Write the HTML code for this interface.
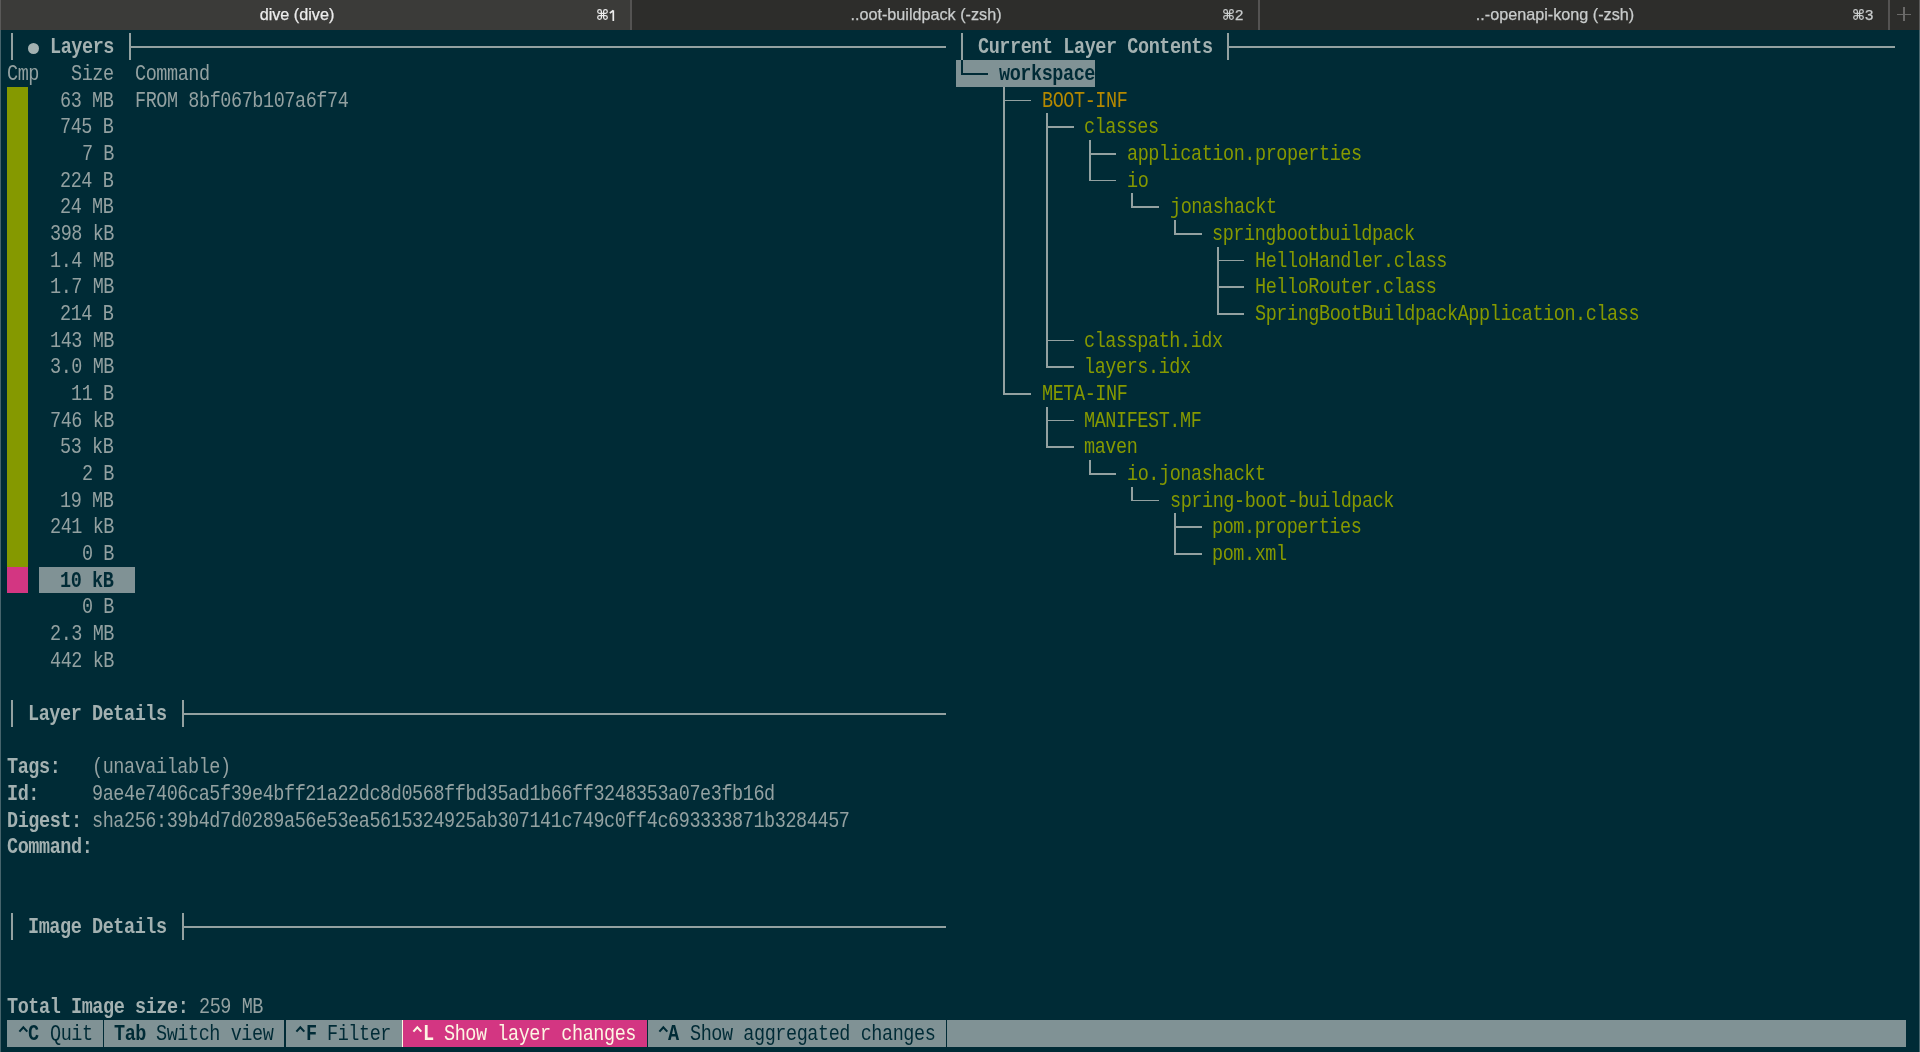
<!DOCTYPE html>
<html><head><meta charset="utf-8"><style>
html,body{margin:0;padding:0;}
body{width:1920px;height:1052px;position:relative;overflow:hidden;background:#002b36;}
.r{position:absolute;}
.t{position:absolute;white-space:pre;font-family:"Liberation Mono",monospace;font-size:18.5px;letter-spacing:-0.4333px;line-height:26.6667px;height:26.6667px;transform:scaleY(1.18);transform-origin:0 0;-webkit-font-smoothing:antialiased;will-change:transform;}
.ts{position:absolute;top:0;white-space:pre;will-change:transform;font-family:"Liberation Sans",sans-serif;font-size:16.2px;line-height:29px;-webkit-text-stroke:0.25px currentColor;}
.cm{position:absolute;}
</style></head><body>
<div class="r" style="left:0;top:0;width:1920px;height:30px;background:#2d2d2b"></div>
<div class="r" style="left:0;top:0;width:630px;height:30px;background:#3b3b39"></div>
<div class="r" style="left:630.00px;top:0.00px;width:1.50px;height:30.00px;background:#545352"></div>
<div class="r" style="left:1258.00px;top:0.00px;width:1.50px;height:30.00px;background:#545352"></div>
<div class="r" style="left:1888.00px;top:0.00px;width:1.50px;height:30.00px;background:#545352"></div>
<div class="ts" style="left:47px;width:500px;text-align:center;color:#ececec">dive (dive)</div>
<div class="ts" style="left:675.5px;width:500px;text-align:center;color:#c9cccc">..oot-buildpack (-zsh)</div>
<div class="ts" style="left:1304.7px;width:500px;text-align:center;color:#c9cccc">..-openapi-kong (-zsh)</div>
<svg class="cm" style="left:596.5px;top:9px;overflow:visible" width="11" height="11" viewBox="0 0 11 11"><path d="M4.40 2.55 V8.45 M6.60 2.55 V8.45 M2.55 4.40 H8.45 M2.55 6.60 H8.45 M4.40 2.55 A1.85 1.85 0 1 0 2.55 4.40 M6.60 2.55 A1.85 1.85 0 1 1 8.45 4.40 M6.60 8.45 A1.85 1.85 0 1 0 8.45 6.60 M4.40 8.45 A1.85 1.85 0 1 1 2.55 6.60" fill="none" stroke="#ececec" stroke-width="1.25"/></svg>
<svg class="cm" style="left:608.5px;top:8.5px" width="7" height="13" viewBox="0 0 7 13"><path d="M4.3 1.2 V12 M4.3 1.5 L0.8 4.2" fill="none" stroke="#ececec" stroke-width="1.7"/></svg>
<svg class="cm" style="left:1222.5px;top:9px;overflow:visible" width="11" height="11" viewBox="0 0 11 11"><path d="M4.40 2.55 V8.45 M6.60 2.55 V8.45 M2.55 4.40 H8.45 M2.55 6.60 H8.45 M4.40 2.55 A1.85 1.85 0 1 0 2.55 4.40 M6.60 2.55 A1.85 1.85 0 1 1 8.45 4.40 M6.60 8.45 A1.85 1.85 0 1 0 8.45 6.60 M4.40 8.45 A1.85 1.85 0 1 1 2.55 6.60" fill="none" stroke="#c9cccc" stroke-width="1.25"/></svg>
<div class="ts" style="left:1235.0px;color:#c9cccc;font-size:15px;line-height:30px">2</div>
<svg class="cm" style="left:1852.5px;top:9px;overflow:visible" width="11" height="11" viewBox="0 0 11 11"><path d="M4.40 2.55 V8.45 M6.60 2.55 V8.45 M2.55 4.40 H8.45 M2.55 6.60 H8.45 M4.40 2.55 A1.85 1.85 0 1 0 2.55 4.40 M6.60 2.55 A1.85 1.85 0 1 1 8.45 4.40 M6.60 8.45 A1.85 1.85 0 1 0 8.45 6.60 M4.40 8.45 A1.85 1.85 0 1 1 2.55 6.60" fill="none" stroke="#c9cccc" stroke-width="1.25"/></svg>
<div class="ts" style="left:1865.0px;color:#c9cccc;font-size:15px;line-height:30px">3</div>
<div class="r" style="left:1897.00px;top:13.60px;width:14.00px;height:1.30px;background:#6a6968"></div>
<div class="r" style="left:1903.40px;top:7.20px;width:1.30px;height:14.00px;background:#6a6968"></div>
<div class="r" style="left:0.00px;top:30.00px;width:1.30px;height:1022.00px;background:#46646c"></div>
<div class="r" style="left:0.00px;top:0.00px;width:1.30px;height:30.00px;background:#5a5958"></div>
<div class="r" style="left:1918.70px;top:30.00px;width:1.30px;height:1022.00px;background:#46646c"></div>
<div class="r" style="left:1918.70px;top:0.00px;width:1.30px;height:30.00px;background:#5a5958"></div>
<div class="r" style="left:11.43px;top:33.33px;width:1.80px;height:26.67px;background:#93a1a1"></div>
<div class="r" style="left:28.17px;top:42.87px;width:11px;height:11px;border-radius:50%;background:#a3b1b1"></div>
<div class="t" style="left:49.67px;top:33.33px;color:#a3b1b1;font-weight:bold;">Layers</div>
<div class="r" style="left:128.77px;top:33.33px;width:1.80px;height:26.67px;background:#93a1a1"></div>
<div class="r" style="left:128.77px;top:46.27px;width:816.90px;height:1.80px;background:#93a1a1"></div>
<div class="t" style="left:7.00px;top:60.00px;color:#93a1a1;">Cmp   Size  Command</div>
<div class="r" style="left:7.00px;top:86.67px;width:21.33px;height:480.00px;background:#859900"></div>
<div class="r" style="left:7.00px;top:566.67px;width:21.33px;height:26.67px;background:#d33682"></div>
<div class="r" style="left:39.00px;top:566.67px;width:96.00px;height:26.67px;background:#809295"></div>
<div class="t" style="left:60.33px;top:86.67px;color:#93a1a1;">63 MB</div>
<div class="t" style="left:60.33px;top:113.33px;color:#93a1a1;">745 B</div>
<div class="t" style="left:81.67px;top:140.00px;color:#93a1a1;">7 B</div>
<div class="t" style="left:60.33px;top:166.67px;color:#93a1a1;">224 B</div>
<div class="t" style="left:60.33px;top:193.33px;color:#93a1a1;">24 MB</div>
<div class="t" style="left:49.67px;top:220.00px;color:#93a1a1;">398 kB</div>
<div class="t" style="left:49.67px;top:246.67px;color:#93a1a1;">1.4 MB</div>
<div class="t" style="left:49.67px;top:273.33px;color:#93a1a1;">1.7 MB</div>
<div class="t" style="left:60.33px;top:300.00px;color:#93a1a1;">214 B</div>
<div class="t" style="left:49.67px;top:326.67px;color:#93a1a1;">143 MB</div>
<div class="t" style="left:49.67px;top:353.33px;color:#93a1a1;">3.0 MB</div>
<div class="t" style="left:71.00px;top:380.00px;color:#93a1a1;">11 B</div>
<div class="t" style="left:49.67px;top:406.67px;color:#93a1a1;">746 kB</div>
<div class="t" style="left:60.33px;top:433.33px;color:#93a1a1;">53 kB</div>
<div class="t" style="left:81.67px;top:460.00px;color:#93a1a1;">2 B</div>
<div class="t" style="left:60.33px;top:486.67px;color:#93a1a1;">19 MB</div>
<div class="t" style="left:49.67px;top:513.33px;color:#93a1a1;">241 kB</div>
<div class="t" style="left:81.67px;top:540.00px;color:#93a1a1;">0 B</div>
<div class="t" style="left:60.33px;top:566.67px;color:#002b36;font-weight:bold;">10 kB</div>
<div class="t" style="left:81.67px;top:593.33px;color:#93a1a1;">0 B</div>
<div class="t" style="left:49.67px;top:620.00px;color:#93a1a1;">2.3 MB</div>
<div class="t" style="left:49.67px;top:646.67px;color:#93a1a1;">442 kB</div>
<div class="t" style="left:135.00px;top:86.67px;color:#93a1a1;">FROM 8bf067b107a6f74</div>
<div class="r" style="left:11.43px;top:700.00px;width:1.80px;height:26.67px;background:#93a1a1"></div>
<div class="t" style="left:28.33px;top:700.00px;color:#a3b1b1;font-weight:bold;">Layer Details</div>
<div class="r" style="left:182.10px;top:700.00px;width:1.80px;height:26.67px;background:#93a1a1"></div>
<div class="r" style="left:182.10px;top:712.93px;width:763.57px;height:1.80px;background:#93a1a1"></div>
<div class="t" style="left:7.00px;top:753.33px;color:#a3b1b1;font-weight:bold;">Tags:</div>
<div class="t" style="left:92.33px;top:753.33px;color:#93a1a1;">(unavailable)</div>
<div class="t" style="left:7.00px;top:780.00px;color:#a3b1b1;font-weight:bold;">Id:</div>
<div class="t" style="left:92.33px;top:780.00px;color:#93a1a1;">9ae4e7406ca5f39e4bff21a22dc8d0568ffbd35ad1b66ff3248353a07e3fb16d</div>
<div class="t" style="left:7.00px;top:806.67px;color:#a3b1b1;font-weight:bold;">Digest:</div>
<div class="t" style="left:92.33px;top:806.67px;color:#93a1a1;">sha256:39b4d7d0289a56e53ea5615324925ab307141c749c0ff4c693333871b3284457</div>
<div class="t" style="left:7.00px;top:833.33px;color:#a3b1b1;font-weight:bold;">Command:</div>
<div class="r" style="left:11.43px;top:913.33px;width:1.80px;height:26.67px;background:#93a1a1"></div>
<div class="t" style="left:28.33px;top:913.33px;color:#a3b1b1;font-weight:bold;">Image Details</div>
<div class="r" style="left:182.10px;top:913.33px;width:1.80px;height:26.67px;background:#93a1a1"></div>
<div class="r" style="left:182.10px;top:926.27px;width:763.57px;height:1.80px;background:#93a1a1"></div>
<div class="t" style="left:7.00px;top:993.33px;color:#a3b1b1;font-weight:bold;">Total Image size:</div>
<div class="t" style="left:199.00px;top:993.33px;color:#93a1a1;">259 MB</div>
<div class="r" style="left:960.77px;top:33.33px;width:1.80px;height:26.67px;background:#93a1a1"></div>
<div class="t" style="left:977.67px;top:33.33px;color:#a3b1b1;font-weight:bold;">Current Layer Contents</div>
<div class="r" style="left:1227.43px;top:33.33px;width:1.80px;height:26.67px;background:#93a1a1"></div>
<div class="r" style="left:1227.43px;top:46.27px;width:667.57px;height:1.80px;background:#93a1a1"></div>
<div class="r" style="left:956.33px;top:60.00px;width:138.67px;height:26.67px;background:#809295"></div>
<div class="r" style="left:960.77px;top:60.00px;width:1.80px;height:14.23px;background:#002b36"></div>
<div class="r" style="left:960.77px;top:72.93px;width:27.57px;height:1.80px;background:#002b36"></div>
<div class="t" style="left:999.00px;top:60.00px;color:#002b36;font-weight:bold;">workspace</div>
<div class="r" style="left:1003.43px;top:86.67px;width:1.80px;height:26.67px;background:#93a1a1"></div>
<div class="r" style="left:1003.43px;top:99.60px;width:27.57px;height:1.80px;background:#93a1a1"></div>
<div class="t" style="left:1041.67px;top:86.67px;color:#b58900;">BOOT-INF</div>
<div class="r" style="left:1003.43px;top:113.33px;width:1.80px;height:26.67px;background:#93a1a1"></div>
<div class="r" style="left:1046.10px;top:113.33px;width:1.80px;height:26.67px;background:#93a1a1"></div>
<div class="r" style="left:1046.10px;top:126.27px;width:27.57px;height:1.80px;background:#93a1a1"></div>
<div class="t" style="left:1084.33px;top:113.33px;color:#859900;">classes</div>
<div class="r" style="left:1003.43px;top:140.00px;width:1.80px;height:26.67px;background:#93a1a1"></div>
<div class="r" style="left:1046.10px;top:140.00px;width:1.80px;height:26.67px;background:#93a1a1"></div>
<div class="r" style="left:1088.77px;top:140.00px;width:1.80px;height:26.67px;background:#93a1a1"></div>
<div class="r" style="left:1088.77px;top:152.93px;width:27.57px;height:1.80px;background:#93a1a1"></div>
<div class="t" style="left:1127.00px;top:140.00px;color:#859900;">application.properties</div>
<div class="r" style="left:1003.43px;top:166.67px;width:1.80px;height:26.67px;background:#93a1a1"></div>
<div class="r" style="left:1046.10px;top:166.67px;width:1.80px;height:26.67px;background:#93a1a1"></div>
<div class="r" style="left:1088.77px;top:166.67px;width:1.80px;height:14.23px;background:#93a1a1"></div>
<div class="r" style="left:1088.77px;top:179.60px;width:27.57px;height:1.80px;background:#93a1a1"></div>
<div class="t" style="left:1127.00px;top:166.67px;color:#859900;">io</div>
<div class="r" style="left:1003.43px;top:193.33px;width:1.80px;height:26.67px;background:#93a1a1"></div>
<div class="r" style="left:1046.10px;top:193.33px;width:1.80px;height:26.67px;background:#93a1a1"></div>
<div class="r" style="left:1131.43px;top:193.33px;width:1.80px;height:14.23px;background:#93a1a1"></div>
<div class="r" style="left:1131.43px;top:206.27px;width:27.57px;height:1.80px;background:#93a1a1"></div>
<div class="t" style="left:1169.67px;top:193.33px;color:#859900;">jonashackt</div>
<div class="r" style="left:1003.43px;top:220.00px;width:1.80px;height:26.67px;background:#93a1a1"></div>
<div class="r" style="left:1046.10px;top:220.00px;width:1.80px;height:26.67px;background:#93a1a1"></div>
<div class="r" style="left:1174.10px;top:220.00px;width:1.80px;height:14.23px;background:#93a1a1"></div>
<div class="r" style="left:1174.10px;top:232.93px;width:27.57px;height:1.80px;background:#93a1a1"></div>
<div class="t" style="left:1212.33px;top:220.00px;color:#859900;">springbootbuildpack</div>
<div class="r" style="left:1003.43px;top:246.67px;width:1.80px;height:26.67px;background:#93a1a1"></div>
<div class="r" style="left:1046.10px;top:246.67px;width:1.80px;height:26.67px;background:#93a1a1"></div>
<div class="r" style="left:1216.77px;top:246.67px;width:1.80px;height:26.67px;background:#93a1a1"></div>
<div class="r" style="left:1216.77px;top:259.60px;width:27.57px;height:1.80px;background:#93a1a1"></div>
<div class="t" style="left:1255.00px;top:246.67px;color:#859900;">HelloHandler.class</div>
<div class="r" style="left:1003.43px;top:273.33px;width:1.80px;height:26.67px;background:#93a1a1"></div>
<div class="r" style="left:1046.10px;top:273.33px;width:1.80px;height:26.67px;background:#93a1a1"></div>
<div class="r" style="left:1216.77px;top:273.33px;width:1.80px;height:26.67px;background:#93a1a1"></div>
<div class="r" style="left:1216.77px;top:286.27px;width:27.57px;height:1.80px;background:#93a1a1"></div>
<div class="t" style="left:1255.00px;top:273.33px;color:#859900;">HelloRouter.class</div>
<div class="r" style="left:1003.43px;top:300.00px;width:1.80px;height:26.67px;background:#93a1a1"></div>
<div class="r" style="left:1046.10px;top:300.00px;width:1.80px;height:26.67px;background:#93a1a1"></div>
<div class="r" style="left:1216.77px;top:300.00px;width:1.80px;height:14.23px;background:#93a1a1"></div>
<div class="r" style="left:1216.77px;top:312.93px;width:27.57px;height:1.80px;background:#93a1a1"></div>
<div class="t" style="left:1255.00px;top:300.00px;color:#859900;">SpringBootBuildpackApplication.class</div>
<div class="r" style="left:1003.43px;top:326.67px;width:1.80px;height:26.67px;background:#93a1a1"></div>
<div class="r" style="left:1046.10px;top:326.67px;width:1.80px;height:26.67px;background:#93a1a1"></div>
<div class="r" style="left:1046.10px;top:339.60px;width:27.57px;height:1.80px;background:#93a1a1"></div>
<div class="t" style="left:1084.33px;top:326.67px;color:#859900;">classpath.idx</div>
<div class="r" style="left:1003.43px;top:353.33px;width:1.80px;height:26.67px;background:#93a1a1"></div>
<div class="r" style="left:1046.10px;top:353.33px;width:1.80px;height:14.23px;background:#93a1a1"></div>
<div class="r" style="left:1046.10px;top:366.27px;width:27.57px;height:1.80px;background:#93a1a1"></div>
<div class="t" style="left:1084.33px;top:353.33px;color:#859900;">layers.idx</div>
<div class="r" style="left:1003.43px;top:380.00px;width:1.80px;height:14.23px;background:#93a1a1"></div>
<div class="r" style="left:1003.43px;top:392.93px;width:27.57px;height:1.80px;background:#93a1a1"></div>
<div class="t" style="left:1041.67px;top:380.00px;color:#859900;">META-INF</div>
<div class="r" style="left:1046.10px;top:406.67px;width:1.80px;height:26.67px;background:#93a1a1"></div>
<div class="r" style="left:1046.10px;top:419.60px;width:27.57px;height:1.80px;background:#93a1a1"></div>
<div class="t" style="left:1084.33px;top:406.67px;color:#859900;">MANIFEST.MF</div>
<div class="r" style="left:1046.10px;top:433.33px;width:1.80px;height:14.23px;background:#93a1a1"></div>
<div class="r" style="left:1046.10px;top:446.27px;width:27.57px;height:1.80px;background:#93a1a1"></div>
<div class="t" style="left:1084.33px;top:433.33px;color:#859900;">maven</div>
<div class="r" style="left:1088.77px;top:460.00px;width:1.80px;height:14.23px;background:#93a1a1"></div>
<div class="r" style="left:1088.77px;top:472.93px;width:27.57px;height:1.80px;background:#93a1a1"></div>
<div class="t" style="left:1127.00px;top:460.00px;color:#859900;">io.jonashackt</div>
<div class="r" style="left:1131.43px;top:486.67px;width:1.80px;height:14.23px;background:#93a1a1"></div>
<div class="r" style="left:1131.43px;top:499.60px;width:27.57px;height:1.80px;background:#93a1a1"></div>
<div class="t" style="left:1169.67px;top:486.67px;color:#859900;">spring-boot-buildpack</div>
<div class="r" style="left:1174.10px;top:513.33px;width:1.80px;height:26.67px;background:#93a1a1"></div>
<div class="r" style="left:1174.10px;top:526.27px;width:27.57px;height:1.80px;background:#93a1a1"></div>
<div class="t" style="left:1212.33px;top:513.33px;color:#859900;">pom.properties</div>
<div class="r" style="left:1174.10px;top:540.00px;width:1.80px;height:14.23px;background:#93a1a1"></div>
<div class="r" style="left:1174.10px;top:552.93px;width:27.57px;height:1.80px;background:#93a1a1"></div>
<div class="t" style="left:1212.33px;top:540.00px;color:#859900;">pom.xml</div>
<div class="r" style="left:7.00px;top:1020.00px;width:1898.67px;height:26.67px;background:#809295"></div>
<div class="r" style="left:7.00px;top:1020.00px;width:96.00px;height:26.67px;background:#809295"></div>
<svg class="cm" style="left:17.67px;top:1025.00px" width="11" height="8" viewBox="0 0 11 8"><path d="M1.4 6.6 L5.33 2.2 L9.3 6.6" fill="none" stroke="#002b36" stroke-width="2.1"/></svg>
<div class="t" style="left:28.33px;top:1020.00px;color:#002b36;font-weight:bold;">C</div>
<div class="t" style="left:49.67px;top:1020.00px;color:#002b36;">Quit</div>
<div class="r" style="left:103.00px;top:1020.00px;width:181.33px;height:26.67px;background:#809295"></div>
<div class="r" style="left:103.00px;top:1020.00px;width:1.33px;height:26.67px;background:#002b36"></div>
<div class="t" style="left:113.67px;top:1020.00px;color:#002b36;font-weight:bold;">Tab</div>
<div class="t" style="left:156.33px;top:1020.00px;color:#002b36;">Switch view</div>
<div class="r" style="left:284.33px;top:1020.00px;width:117.33px;height:26.67px;background:#809295"></div>
<div class="r" style="left:284.33px;top:1020.00px;width:1.33px;height:26.67px;background:#002b36"></div>
<svg class="cm" style="left:295.00px;top:1025.00px" width="11" height="8" viewBox="0 0 11 8"><path d="M1.4 6.6 L5.33 2.2 L9.3 6.6" fill="none" stroke="#002b36" stroke-width="2.1"/></svg>
<div class="t" style="left:305.67px;top:1020.00px;color:#002b36;font-weight:bold;">F</div>
<div class="t" style="left:327.00px;top:1020.00px;color:#002b36;">Filter</div>
<div class="r" style="left:401.67px;top:1020.00px;width:245.33px;height:26.67px;background:#d33682"></div>
<div class="r" style="left:401.67px;top:1020.00px;width:1.33px;height:26.67px;background:#fdf6e3"></div>
<svg class="cm" style="left:412.33px;top:1025.00px" width="11" height="8" viewBox="0 0 11 8"><path d="M1.4 6.6 L5.33 2.2 L9.3 6.6" fill="none" stroke="#fdf6e3" stroke-width="2.1"/></svg>
<div class="t" style="left:423.00px;top:1020.00px;color:#fdf6e3;font-weight:bold;">L</div>
<div class="t" style="left:444.33px;top:1020.00px;color:#fdf6e3;">Show layer changes</div>
<div class="r" style="left:647.00px;top:1020.00px;width:298.67px;height:26.67px;background:#809295"></div>
<div class="r" style="left:647.00px;top:1020.00px;width:1.33px;height:26.67px;background:#002b36"></div>
<svg class="cm" style="left:657.67px;top:1025.00px" width="11" height="8" viewBox="0 0 11 8"><path d="M1.4 6.6 L5.33 2.2 L9.3 6.6" fill="none" stroke="#002b36" stroke-width="2.1"/></svg>
<div class="t" style="left:668.33px;top:1020.00px;color:#002b36;font-weight:bold;">A</div>
<div class="t" style="left:689.67px;top:1020.00px;color:#002b36;">Show aggregated changes</div>
<div class="r" style="left:945.67px;top:1020.00px;width:1.33px;height:26.67px;background:#002b36"></div>
</body></html>
